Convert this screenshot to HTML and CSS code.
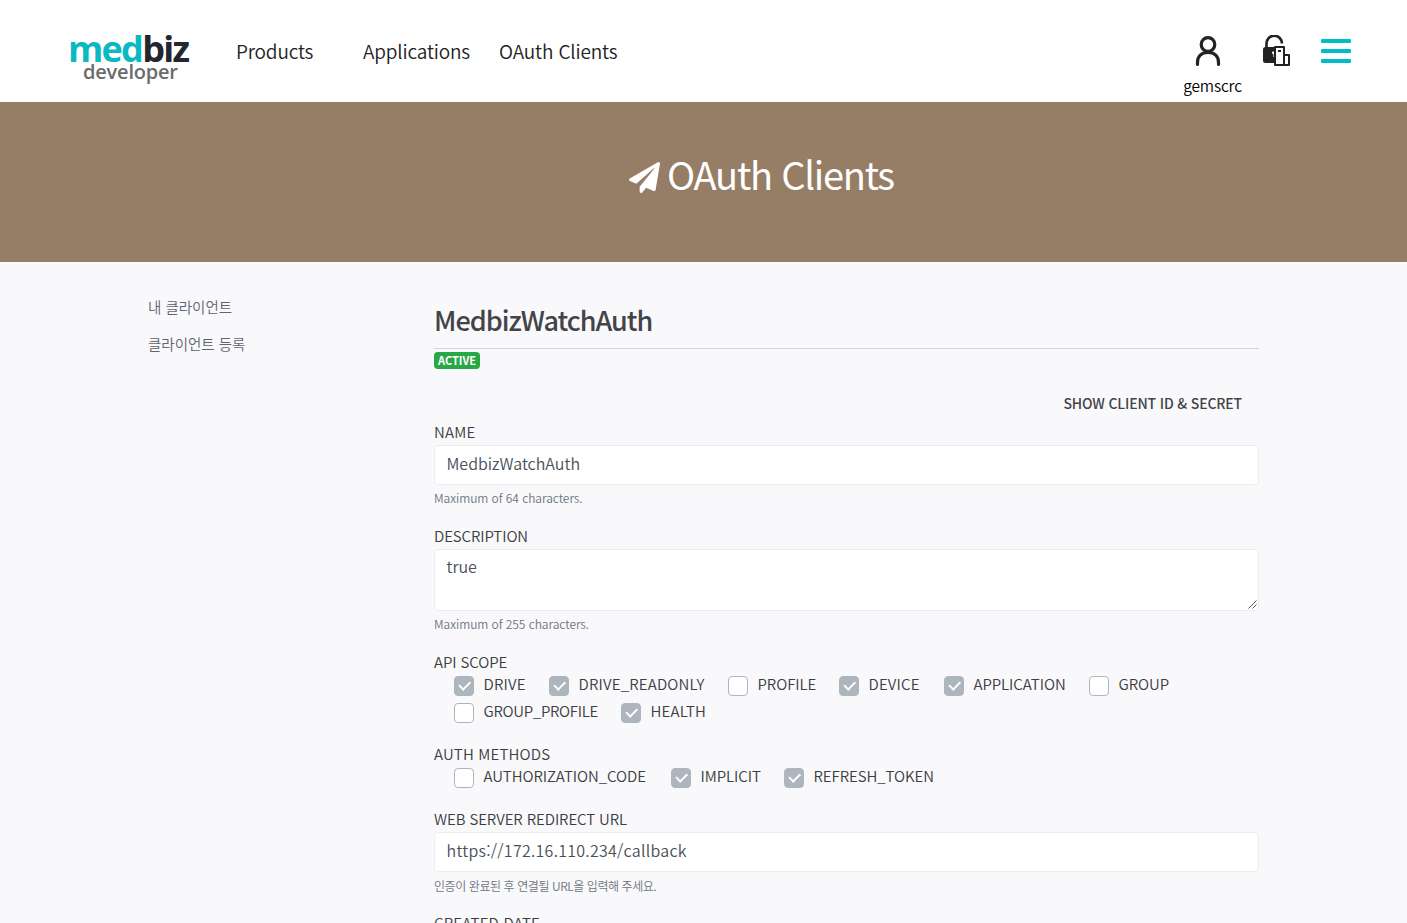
FILE: index.html
```html
<!DOCTYPE html>
<html lang="ko">
<head>
<meta charset="utf-8">
<title>medbiz developer</title>
<link rel="stylesheet" href="styles.css">
</head>
<body>
<header class="header">
  <a class="logo"><span class="logo-top"><b>med</b>biz</span><span class="logo-sub">developer</span></a>
  <nav class="nav"><a class="nav-products">Products</a><a class="nav-apps">Applications</a><a class="nav-oauth">OAuth Clients</a></nav>
  <div class="user">
    <svg width="26" height="32" viewBox="0 0 26 32" fill="none" stroke="#222" stroke-width="3.2" stroke-linecap="round"><circle cx="13" cy="8.500" r="6.800"/><path d="M2.500 28.500v-2C2.500 20 7 16.300 13 16.300S23.500 20 23.500 26.500V28.500"/></svg>
    <span class="user-name">gemscrc</span>
  </div>
  <svg class="lock" width="28" height="32" viewBox="0 0 28 32"><path d="M3.500 14V8.500a7.500 7.500 0 0 1 15.500 0" fill="none" stroke="#222" stroke-width="2.600"/><path d="M2.500 12H12v16H2.500A2.500 2.500 0 0 1 0 25.500V14.500A2.500 2.500 0 0 1 2.500 12z" fill="#222"/><path d="M11.500 16.500h-1.300a1.200 1.200 0 0 0-.8 2.200l1 .8v2.500h1z" fill="#fff"/><path d="M12 12h9v18h-9zM21 20h5v10h-5z" fill="#fff" stroke="#222" stroke-width="2" stroke-linejoin="round"/><path d="M15 15h3v2h-3z" fill="#222"/></svg>
  <div class="menu"><i></i><i></i><i></i></div>
</header>
<section class="banner">
  <svg width="31" height="31" viewBox="0 0 512 512" preserveAspectRatio="none" fill="#fff"><path d="M476 3.200L12.500 270.600c-18.100 10.400-15.800 35.600 2.200 43.200L121 358.400l287.300-253.200c5.500-4.900 13.300 2.600 8.600 8.300L176 407v80.500c0 23.600 28.500 32.900 42.500 15.800L282 426l124.600 52.200c14.200 6 30.400-2.900 33-18.200l72-432C515 7.800 493.300-6.800 476 3.200z"/></svg>
  <h1>OAuth Clients</h1>
</section>
<div class="page">
  <aside class="side"><a>내 클라이언트</a><a>클라이언트 등록</a></aside>
  <main class="main">
    <h2>MedbizWatchAuth</h2>
    <span class="badge">ACTIVE</span>
    <div class="secret">SHOW CLIENT ID &amp; SECRET</div>
    <section class="group">
      <label class="label wide">NAME</label>
      <div class="field"><span>MedbizWatchAuth</span></div>
      <small class="help">Maximum of 64 characters.</small>
    </section>
    <section class="group">
      <label class="label">DESCRIPTION</label>
      <div class="field area"><span>true</span><svg class="grip" width="9" height="9" viewBox="0 0 9 9" fill="none" stroke="#555" stroke-width="1"><path d="M.5 8.500l8-8M4.500 8.500l4-4"/></svg></div>
      <small class="help">Maximum of 255 characters.</small>
    </section>
    <section class="choices">
      <label class="label">API SCOPE</label>
      <div class="checks">
        <span class="check on w95 wide">DRIVE</span><span class="check on w179 wide">DRIVE_READONLY</span><span class="check w111">PROFILE</span><span class="check on w105 wide">DEVICE</span><span class="check on w145">APPLICATION</span><span class="check w104">GROUP</span>
        <span class="check w167 narrow">GROUP_PROFILE</span><span class="check on wide">HEALTH</span>
      </div>
    </section>
    <section class="choices">
      <label class="label wide">AUTH METHODS</label>
      <div class="checks">
        <span class="check w217">AUTHORIZATION_CODE</span><span class="check on w113">IMPLICIT</span><span class="check on">REFRESH_TOKEN</span>
      </div>
    </section>
    <section class="group">
      <label class="label">WEB SERVER REDIRECT URL</label>
      <div class="field"><span class="v-url">https://172.16.110.234/callback</span></div>
      <small class="help help-ko">인증이 완료된 후 연결될 URL을 입력해 주세요.</small>
    </section>
    <section class="group"><label class="label wide">CREATED DATE</label></section>
  </main>
</div>
</body>
</html>
```
FILE: styles.css
```css
*, *::before, *::after { box-sizing: border-box; }
body { margin: 0; height: 923px; overflow: hidden; background: #f9f9fb; color: #3c3e42; font-family: "Noto Sans CJK KR", sans-serif; font-weight: 350; white-space: nowrap; }
.header { height: 102px; background: #fff; display: flex; align-items: flex-start; padding-left: 68px; }
.logo { width: 168px; padding-top: 31px; display: flex; flex-direction: column; font-family: "Open Sans", sans-serif; font-weight: 700; }
.logo-top { color: #25252f; font-size: 36px; line-height: 36px; letter-spacing: -1.75px; }
.logo-top b { color: #09b9c4; font-weight: 700; }
.logo-sub { color: #6b6b6b; font-size: 20px; line-height: 20px; margin: -5px 0 0 15px; font-weight: 600; letter-spacing: -.2px; }
.nav { display: flex; padding-top: 36px; font-size: 19px; line-height: 30px; letter-spacing: -.15px; color: #222; }
.nav-products { width: 127px; }
.nav-apps { width: 136px; }
.nav-oauth { width: 120px; }
.user { margin-left: 564px; width: 59px; padding-top: 36px; display: flex; flex-direction: column; align-items: center; }
.user svg { margin-right: 9px; }
.user-name { font-size: 15.5px; line-height: 20px; margin-top: 7px; letter-spacing: -.15px; color: #000; }
.lock { margin: 35px 0 0 21px; }
.menu { width: 30px; margin: 39px 0 0 30px; display: flex; flex-direction: column; gap: 6px; }
.menu i { height: 4px; background: #00bcc9; border-radius: 1px; }
.banner { height: 160px; background: #967d65; display: flex; align-items: flex-start; padding-left: 629px; }
.banner svg { margin-top: 60px; }
.banner h1 { margin: 47px 0 0 7px; font-size: 38px; line-height: 50px; font-weight: 400; letter-spacing: -1.25px; color: #fff; }
.page { display: flex; padding-left: 148px; }
.side { width: 286px; padding-top: 35px; display: flex; flex-direction: column; gap: 17px; font-size: 14.5px; line-height: 20px; color: #60646e; }
.main { width: 825px; }
h2 { margin: 0; height: 87px; padding-top: 38px; font-size: 27px; line-height: 40px; font-weight: 500; letter-spacing: -1px; border-bottom: 1px solid #d5d6d9; color: #424448; }
.badge { display: block; width: 46px; height: 17px; margin-top: 3px; border-radius: 4px; background: #28a745; color: #fff; font-size: 11px; line-height: 16px; font-weight: 700; text-align: center; }
.secret { height: 36px; margin-top: 16px; padding-right: 17px; text-align: right; font-size: 14px; line-height: 36px; font-weight: 500; letter-spacing: -.15px; color: #424448; }
.group { margin-bottom: 16px; }
.label { display: block; height: 24px; font-size: 15px; line-height: 22px; letter-spacing: -.1px; }
.field { height: 40px; border: 1px solid #ebedef; border-radius: 4px; background: #fff; padding: 0 12px 0 11.5px; font-size: 16px; line-height: 35px; color: #495057; }
.v-url { letter-spacing: .26px; }
.area { position: relative; height: 62px; line-height: 32px; }
.grip { position: absolute; right: 1px; bottom: 1px; }
.help { display: block; margin-top: 4px; height: 20px; line-height: 18px; font-size: 12px; letter-spacing: -.06px; color: #6c757d; }
.help-ko { line-height: 19px; letter-spacing: -.42px; }
.choices { margin-bottom: 14px; }
.checks { display: flex; flex-wrap: wrap; padding-left: 20px; }
.check { position: relative; height: 27px; padding-left: 29.5px; font-size: 15px; line-height: 18px; letter-spacing: -.07px; }
.check::before { content: ""; position: absolute; left: 0; top: 1px; width: 20px; height: 20px; border: 1px solid #adb5bd; border-radius: 4px; background: #fff; }
.on::before { background: #adb5bd; }
.on::after { content: ""; position: absolute; left: 4.500px; top: 6px; width: 11px; height: 6.500px; border: solid #fff; border-width: 0 0 2px 2px; transform: rotate(-45deg); }
.wide { letter-spacing: .18px; }
.narrow { letter-spacing: -.3px; }
.w95 { width: 95px; } .w179 { width: 179px; } .w111 { width: 111px; } .w105 { width: 105px; }
.w145 { width: 145px; } .w104 { width: 104px; } .w167 { width: 167px; } .w217 { width: 217px; } .w113 { width: 113px; }
```
